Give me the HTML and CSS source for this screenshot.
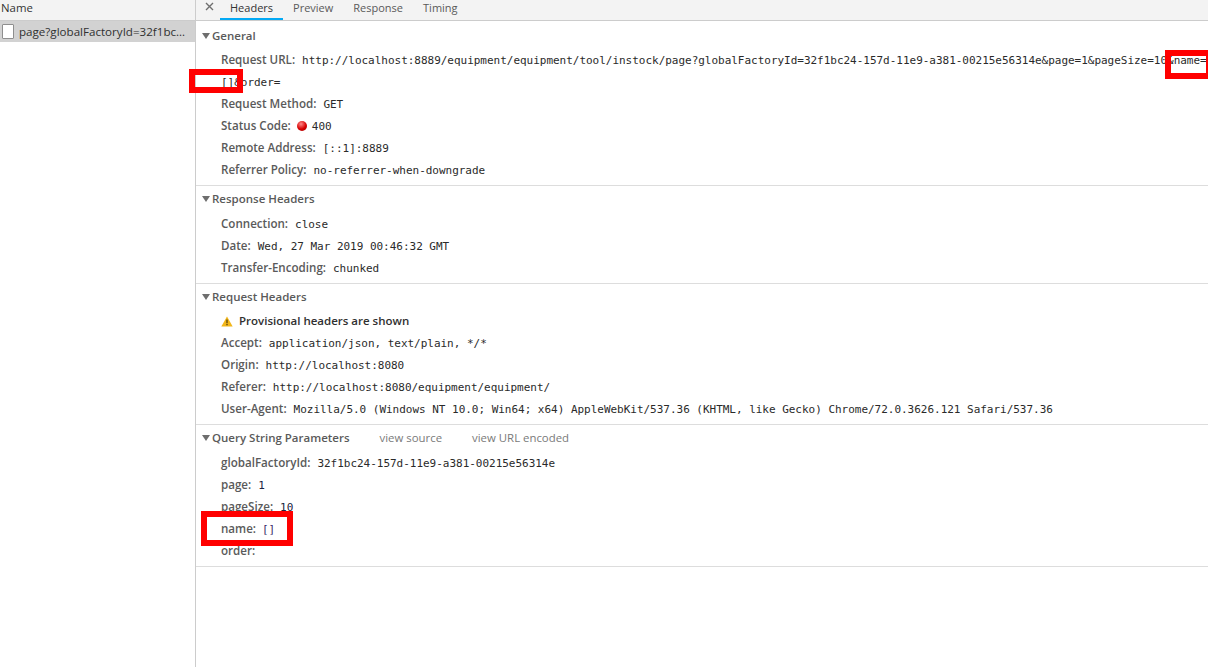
FILE: index.html
```html
<!DOCTYPE html>
<html lang="en">
<head>
<meta charset="utf-8">
<title>Network headers</title>
<link rel="stylesheet" href="styles.css">
</head>
<body>
<div class="app">
  <aside class="list">
    <div class="list-head">Name</div>
    <div class="list-row">
      <span class="file-icon"></span>
      <span class="file-name">page?globalFactoryId=32f1bc…</span>
    </div>
  </aside>
  <main class="detail">
    <nav class="tabs">
      <svg class="close" width="9" height="9" viewBox="0 0 9 9"><path d="M1 1l7 7M8 1L1 8" stroke="#6e6e6e" stroke-width="1.4" fill="none"/></svg>
      <span class="tab active">Headers</span>
      <span class="tab">Preview</span>
      <span class="tab">Response</span>
      <span class="tab">Timing</span>
    </nav>
    <section class="group first">
      <h2 class="title"><i class="arrow"></i>General</h2>
      <div class="row"><b>Request URL:</b><span class="val">http://localhost:8889/equipment/equipment/tool/instock/page?globalFactoryId=32f1bc24-157d-11e9-a381-00215e56314e&amp;page=1&amp;pageSize=10&amp;name=<br>[]&amp;order=</span></div>
      <div class="row"><b>Request Method:</b><span class="val">GET</span></div>
      <div class="row"><b>Status Code:</b><i class="dot"></i><span class="val status">400</span></div>
      <div class="row"><b>Remote Address:</b><span class="val">[::1]:8889</span></div>
      <div class="row"><b>Referrer Policy:</b><span class="val">no-referrer-when-downgrade</span></div>
    </section>
    <section class="group">
      <h2 class="title wide"><i class="arrow"></i>Response Headers</h2>
      <div class="row"><b>Connection:</b><span class="val">close</span></div>
      <div class="row"><b>Date:</b><span class="val">Wed, 27 Mar 2019 00:46:32 GMT</span></div>
      <div class="row"><b>Transfer-Encoding:</b><span class="val">chunked</span></div>
    </section>
    <section class="group">
      <h2 class="title"><i class="arrow"></i>Request Headers</h2>
      <div class="row warn"><svg class="warn-icon" width="12" height="11" viewBox="0 0 12 11"><path d="M6 0.5L11.7 10.5H0.3z" fill="#f2b619"/><path d="M5.4 3.5h1.2v3.8H5.4zM5.4 8h1.2v1.2H5.4z" fill="#4a3a10"/></svg><strong>Provisional headers are shown</strong></div>
      <div class="row"><b>Accept:</b><span class="val">application/json, text/plain, */*</span></div>
      <div class="row"><b>Origin:</b><span class="val">http://localhost:8080</span></div>
      <div class="row"><b>Referer:</b><span class="val">http://localhost:8080/equipment/equipment/</span></div>
      <div class="row"><b>User-Agent:</b><span class="val">Mozilla/5.0 (Windows NT 10.0; Win64; x64) AppleWebKit/537.36 (KHTML, like Gecko) Chrome/72.0.3626.121 Safari/537.36</span></div>
    </section>
    <section class="group">
      <h2 class="title wide"><i class="arrow"></i>Query String Parameters<span class="link">view source</span><span class="link">view URL encoded</span></h2>
      <div class="row"><b>globalFactoryId:</b><span class="val">32f1bc24-157d-11e9-a381-00215e56314e</span></div>
      <div class="row"><b>page:</b><span class="val num">1</span></div>
      <div class="row"><b>pageSize:</b><span class="val num">10</span></div>
      <div class="row"><b>name:</b><span class="val arr">[]</span></div>
      <div class="row"><b>order:</b></div>
    </section>
  </main>
</div>
<div class="mark mark-a"></div>
<div class="mark mark-b"></div>
<div class="mark mark-c"></div>
</body>
</html>
```
FILE: styles.css
```css
* { box-sizing: border-box; }
html, body { margin: 0; height: 100%; overflow: hidden; background: #fff; }
body { font: 11.4px "Open Sans", sans-serif; color: #303030; position: relative; }
.app { display: flex; height: 667px; }
.list { width: 196px; border-right: 1px solid #ccc; flex: none; }
.list-head { height: 21px; background: #f3f3f3; border-bottom: 1px solid #ccc; padding-left: 1px; line-height: 15px; color: #333; }
.list-row { height: 21px; background: #d2d2d2; display: flex; align-items: center; padding-left: 2px; }
.file-icon { width: 12px; height: 15px; background: #fff; border: 1px solid #8e8e8e; border-radius: 1px; flex: none; }
.file-name { margin-left: 5px; white-space: nowrap; font-size: 11.6px; }
.detail { flex: 1; min-width: 0; }
.tabs { height: 21px; background: #f3f3f3; border-bottom: 1px solid #ccc; display: flex; align-items: flex-start; }
.close { margin: 2px 0 0 9px; flex: none; }
.tab { height: 20px; padding: 0 10px; line-height: 15px; color: #5a5a5a; font-size: 11px; }
.tab.active { color: #333; border-bottom: 2px solid #03a9f4; margin-left: 6px; }
.group { border-bottom: 1px solid #ddd; padding: 2px 0 4px; }
.group.first { padding-top: 4px; }
.title { margin: 0 0 2px; font-size: 11.5px; font-weight: 600; color: #5a5a5a; height: 22px; line-height: 22px; display: flex; align-items: center; padding-left: 6px; }
.title.wide { margin-bottom: 3px; }
.arrow { width: 0; height: 0; border-left: 4px solid transparent; border-right: 4px solid transparent; border-top: 6px solid #6e6e6e; margin-right: 2px; }
.row { padding-left: 25px; line-height: 22px; height: 22px; white-space: nowrap; font-size: 11.6px; }
.row:first-of-type { height: auto; }
.row b { font-weight: 600; color: #5a5a5a; margin-right: 6px; }
.val { font: 11px/11px "DejaVu Sans Mono", monospace; color: #2a2a2a; margin-left: 1px; letter-spacing: -0.02px; }
.val.status { margin-left: 0; }
.num { color: #1a2440; }
.arr { color: #3a2a6a; margin-left: 0; }
.dot { display: inline-block; width: 10px; height: 10px; border-radius: 50%; background: radial-gradient(circle at 40% 30%, #f88, #d60000 55%, #a00000); margin-right: 5px; vertical-align: -1px; }
.warn { display: flex; align-items: center; }
.warn-icon { flex: none; margin-right: 6px; }
.warn strong { font-weight: 600; color: #303030; font-size: 11.5px; }
.link { font-weight: 400; color: #7a7a7a; margin-left: 30px; font-size: 11.4px; }
.mark { position: absolute; border: 6px solid #f00; }
.mark-a { left: 1165px; top: 50px; width: 43px; height: 29px; border-width: 6px 2px 6px 6px; }
.mark-b { left: 189px; top: 69px; width: 54px; height: 24px; }
.mark-c { left: 201px; top: 511px; width: 92px; height: 35px; }
```
